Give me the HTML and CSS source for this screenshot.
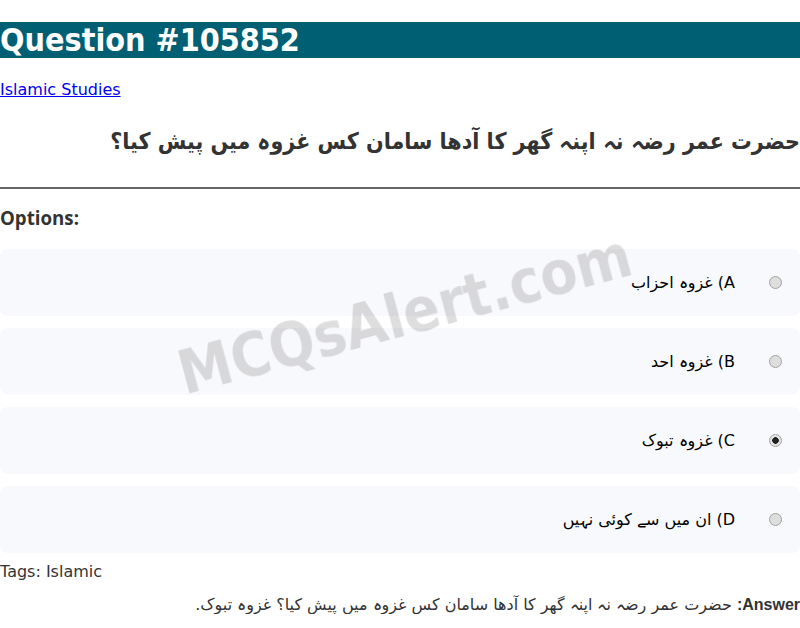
FILE: index.html
```html
<!DOCTYPE html>
<html lang="ur">
<head>
<meta charset="utf-8">
<title>Question #105852</title>
<link rel="stylesheet" href="styles.css">
</head>
<body>
<h1 class="title">Question #105852</h1>
<p class="cat"><a href="#">Islamic Studies</a></p>
<h2 class="question" dir="rtl">حضرت عمر رضہ نہ اپنہ گھر کا آدھا سامان کس غزوہ میں پیش کیا؟</h2>
<hr class="rule">
<h3 class="opt-title">Options:</h3>
<div class="options">
  <label class="option" dir="rtl"><input type="radio" name="o" disabled><span class="opt-text">A) غزوہ احزاب</span></label>
  <label class="option" dir="rtl"><input type="radio" name="o" disabled><span class="opt-text">B) غزوہ احد</span></label>
  <label class="option" dir="rtl"><input type="radio" name="o" disabled checked><span class="opt-text">C) غزوہ تبوک</span></label>
  <label class="option" dir="rtl"><input type="radio" name="o" disabled><span class="opt-text">D) ان میں سے کوئی نہیں</span></label>
</div>
<p class="tags">Tags: Islamic</p>
<p class="answer" dir="rtl"><strong>Answer:</strong> حضرت عمر رضہ نہ اپنہ گھر کا آدھا سامان کس غزوہ میں پیش کیا؟ غزوہ تبوک.</p>
<div class="watermark">MCQsAlert.com</div>
</body>
</html>
```

FILE: styles.css
```css
html, body {
  margin: 0;
  padding: 0;
  background: #ffffff;
  font-family: "DejaVu Sans", sans-serif;
  font-size: 16px;
  color: #333333;
}
.title {
  background: #005f73;
  color: #ffffff;
  font-family: "DejaVu Sans Condensed", "DejaVu Sans", sans-serif;
  font-size: 32px;
  line-height: 36px;
  font-weight: bold;
  margin: 22px 0 22px 0;
}
.cat {
  margin: 0;
}
.cat a {
  color: #0000ee;
}
.question {
  font-family: "DejaVu Sans Condensed", "DejaVu Sans", sans-serif;
  font-size: 23px;
  font-weight: bold;
  color: #333333;
  text-align: right;
  margin: 29px 0 0 0;
  padding-bottom: 33px;
}
.rule {
  margin: 0;
  border: none;
  border-top: 2px solid #666666;
}
.opt-title {
  font-family: "Open Sans", "DejaVu Sans", sans-serif;
  font-size: 18.7px;
  font-weight: bold;
  margin: 16px 0 0 0;
  padding-bottom: 19px;
}
.options {
  display: flex;
  flex-direction: column;
  gap: 12px;
}
.option {
  display: flex;
  align-items: center;
  gap: 34px;
  background: #f8f9fc;
  border-radius: 8px;
  padding: 24px 18px;
  color: #000000;
}
.option input {
  appearance: none;
  -webkit-appearance: none;
  margin: 0;
  width: 13px;
  height: 13px;
  border: 1px solid #a3a3a3;
  border-radius: 50%;
  background: #dedede;
  box-sizing: border-box;
}
.option input:checked {
  background: radial-gradient(circle, #222222 0, #222222 3px, #e4e4e4 3.6px);
}
.tags {
  margin: 9px 0 0 0;
}
.answer {
  margin: 14px 0 0 0;
  text-align: right;
}
.answer strong {
  font-family: "Liberation Sans", Arial, sans-serif;
  font-weight: bold;
}
.watermark {
  position: fixed;
  top: 50%;
  left: 50%;
  width: max-content;
  transform: translate(-49%, -50%) rotate(-15deg);
  font-family: "DejaVu Sans Condensed", "DejaVu Sans", sans-serif;
  font-size: 60px;
  font-weight: bold;
  color: rgba(0, 0, 0, 0.13);
  white-space: nowrap;
  pointer-events: none;
}
```
